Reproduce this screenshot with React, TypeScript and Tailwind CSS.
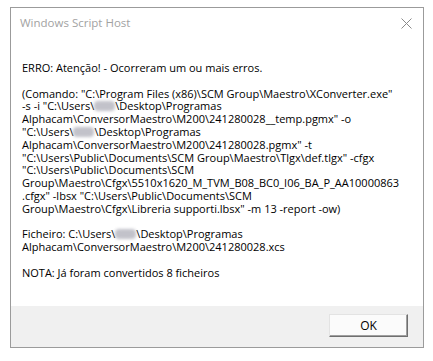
import React from "react";

function Blur() {
  return (
    <span className="relative inline-block h-[10px] w-[21px] align-[-1px]">
      <span className="absolute inset-0 rounded-sm bg-[#a9a9b4] opacity-70 blur-[1.5px]" />
    </span>
  );
}

export default function App() {
  const font = { fontFamily: '"Open Sans", "Noto Sans", sans-serif' };
  return (
    <div className="h-[361px] w-[433px] bg-white pl-[10px] pt-[7px]" style={font}>
      <div className="flex h-[341px] w-[414px] flex-col border border-[#9b9b9b] bg-white">
        <div className="flex h-[30px] items-center justify-between pl-[9px] pr-[9px]">
          <span className="text-[11.5px] text-[#a2a2a2]">Windows Script Host</span>
          <svg width="11" height="11" viewBox="0 0 11 11" className="mr-[2px]">
            <path d="M0.5 0.5 L10.5 10.5 M10.5 0.5 L0.5 10.5" stroke="#8a8a8a" strokeWidth="1" />
          </svg>
        </div>
        <div className="flex-1 pl-[11px] pt-[24px] text-[11px] leading-[12.8px] text-black whitespace-pre">
          <div>ERRO: Atenção! - Ocorreram um ou mais erros.</div>
          <div>&nbsp;</div>
          <div>(Comando: "C:\Program Files (x86)\SCM Group\Maestro\XConverter.exe"</div>
          <div>-s -i "C:\Users\<Blur />\Desktop\Programas</div>
          <div>Alphacam\ConversorMaestro\M200\241280028__temp.pgmx" -o</div>
          <div>"C:\Users\<Blur />\Desktop\Programas</div>
          <div>Alphacam\ConversorMaestro\M200\241280028.pgmx" -t</div>
          <div>"C:\Users\Public\Documents\SCM Group\Maestro\Tlgx\def.tlgx" -cfgx</div>
          <div>"C:\Users\Public\Documents\SCM</div>
          <div>Group\Maestro\Cfgx\5510x1620_M_TVM_B08_BC0_I06_BA_P_AA10000863</div>
          <div>.cfgx" -lbsx "C:\Users\Public\Documents\SCM</div>
          <div>Group\Maestro\Cfgx\Libreria supporti.lbsx" -m 13 -report -ow)</div>
          <div>&nbsp;</div>
          <div>Ficheiro: C:\Users\<Blur />\Desktop\Programas</div>
          <div>Alphacam\ConversorMaestro\M200\241280028.xcs</div>
          <div>&nbsp;</div>
          <div>NOTA: Já foram convertidos 8 ficheiros</div>
        </div>
        <div className="flex h-[41px] items-start justify-end bg-[#f0f0f0] pr-[15px] pt-[8px]">
          <button className="flex h-[23px] w-[79px] items-center justify-center border border-t-[#e3e3e3] border-l-[#e3e3e3] border-r-[#6f6f6f] border-b-[#6f6f6f] bg-[#fbfbfb] text-[12px] text-black shadow-[inset_-1px_-1px_0_#a0a0a0]">
            OK
          </button>
        </div>
      </div>
    </div>
  );
}
